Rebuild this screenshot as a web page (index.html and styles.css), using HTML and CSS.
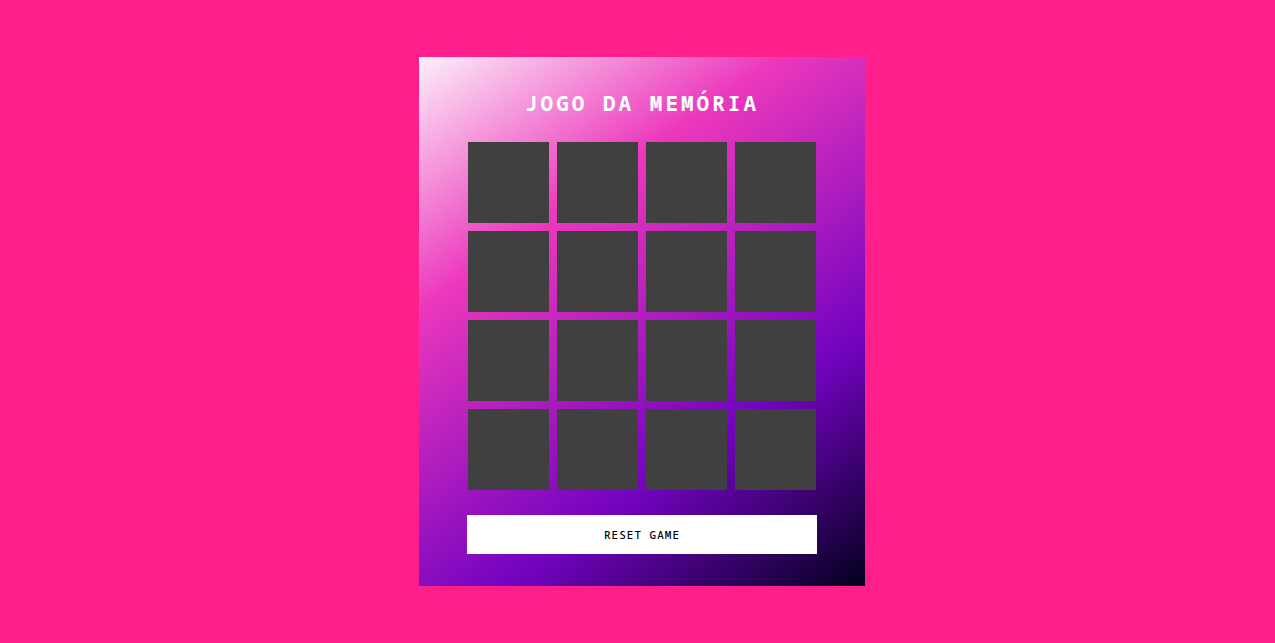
FILE: index.html
```html
<!DOCTYPE html>
<html lang="pt-BR">
<head>
  <meta charset="UTF-8">
  <meta name="viewport" content="width=device-width, initial-scale=1">
  <title>Jogo da Memória</title>
  <link rel="stylesheet" href="styles.css">
</head>
<body>
  <main class="game">
    <h1 class="title">JOGO DA MEMÓRIA</h1>
    <div class="board">
      <button class="card" type="button" aria-label="Carta 1"></button>
      <button class="card" type="button" aria-label="Carta 2"></button>
      <button class="card" type="button" aria-label="Carta 3"></button>
      <button class="card" type="button" aria-label="Carta 4"></button>
      <button class="card" type="button" aria-label="Carta 5"></button>
      <button class="card" type="button" aria-label="Carta 6"></button>
      <button class="card" type="button" aria-label="Carta 7"></button>
      <button class="card" type="button" aria-label="Carta 8"></button>
      <button class="card" type="button" aria-label="Carta 9"></button>
      <button class="card" type="button" aria-label="Carta 10"></button>
      <button class="card" type="button" aria-label="Carta 11"></button>
      <button class="card" type="button" aria-label="Carta 12"></button>
      <button class="card" type="button" aria-label="Carta 13"></button>
      <button class="card" type="button" aria-label="Carta 14"></button>
      <button class="card" type="button" aria-label="Carta 15"></button>
      <button class="card" type="button" aria-label="Carta 16"></button>
    </div>
    <button class="reset" type="button">RESET GAME</button>
  </main>
</body>
</html>
```
FILE: styles.css
```css
* {
  box-sizing: border-box;
}

body {
  display: flex;
  align-items: center;
  justify-content: center;
  min-height: 100vh;
  margin: 0;
  padding-left: 9px;
  background: #ff1f8b;
  font-family: "Noto Sans Mono", "DejaVu Sans Mono", monospace;
}

.game {
  display: flex;
  flex-direction: column;
  gap: 24px;
  width: 100%;
  max-width: 446px;
  padding: 32px 48px;
  background: linear-gradient(145deg, #fdeff9, #ec38bc 30%, #7303c0 70%, #03001e);
}

.title {
  margin: 0;
  color: #fff;
  font-size: 21px;
  font-weight: 700;
  line-height: 29px;
  letter-spacing: 3px;
  text-align: center;
}

.board {
  display: grid;
  grid-template-columns: repeat(4, 1fr);
  gap: 8px;
  padding: 0 1px 1px;
}

.card {
  aspect-ratio: 1;
  padding: 0;
  border: 0;
  background: #404040;
  cursor: pointer;
}

.reset {
  padding: 12px;
  border: 0;
  background: #fff;
  color: #000;
  font: inherit;
  font-size: 11px;
  font-weight: 500;
  line-height: 15px;
  letter-spacing: 1px;
  cursor: pointer;
}
```
